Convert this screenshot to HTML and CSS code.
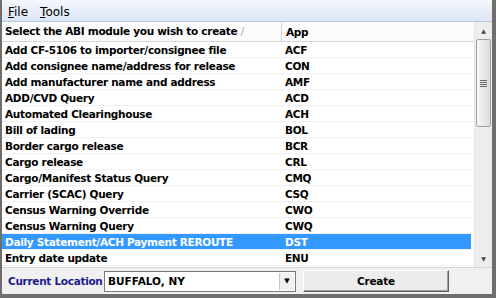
FILE: index.html
```html
<!DOCTYPE html>
<html lang="en">
<head>
  <meta charset="UTF-8" />
  <title>ABI Module</title>
  <link rel="stylesheet" href="styles.css">
</head>
<body>
<div class="window">
  <div class="menubar">
    <span class="menu"><u>F</u>ile</span>
    <span class="menu"><u>T</u>ools</span>
  </div>

  <div class="listwrap">
    <div class="list">
      <div class="row head">
        <div class="c1">Select the ABI module you wish to create <span class="sort">/</span></div>
        <div class="c2">App</div>
      </div>
      <div class="row"><div class="c1">Add CF-5106 to importer/consignee file</div><div class="c2">ACF</div></div>
      <div class="row"><div class="c1">Add consignee name/address for release</div><div class="c2">CON</div></div>
      <div class="row"><div class="c1">Add manufacturer name and address</div><div class="c2">AMF</div></div>
      <div class="row"><div class="c1">ADD/CVD Query</div><div class="c2">ACD</div></div>
      <div class="row"><div class="c1">Automated Clearinghouse</div><div class="c2">ACH</div></div>
      <div class="row"><div class="c1">Bill of lading</div><div class="c2">BOL</div></div>
      <div class="row"><div class="c1">Border cargo release</div><div class="c2">BCR</div></div>
      <div class="row"><div class="c1">Cargo release</div><div class="c2">CRL</div></div>
      <div class="row"><div class="c1">Cargo/Manifest Status Query</div><div class="c2">CMQ</div></div>
      <div class="row"><div class="c1">Carrier (SCAC) Query</div><div class="c2">CSQ</div></div>
      <div class="row"><div class="c1">Census Warning Override</div><div class="c2">CWO</div></div>
      <div class="row"><div class="c1">Census Warning Query</div><div class="c2">CWQ</div></div>
      <div class="row selected"><div class="c1">Daily Statement/ACH Payment REROUTE</div><div class="c2">DST</div></div>
      <div class="row"><div class="c1">Entry date update</div><div class="c2">ENU</div></div>
    </div>
    <div class="scrollbar">
      <div class="arrow">&#9650;</div>
      <div class="thumb"><span class="grip"></span></div>
      <div class="track"></div>
      <div class="arrow">&#9660;</div>
    </div>
  </div>

  <div class="footer">
    <span class="label">Current Location</span>
    <div class="combo">
      <span class="value">BUFFALO, NY</span>
      <span class="drop">&#9660;</span>
    </div>
    <button class="create">Create</button>
  </div>
</div>
</body>
</html>
```

FILE: styles.css
```css
body {
  margin: 0;
  font-family: 'DejaVu Sans', sans-serif;
  background: #fff;
}
.window {
  width: 490px;
  height: 294px;
  border-left: 2px solid #6e6e6e;
  border-right: 4px solid #6e6e6e;
  border-bottom: 4px solid #6e6e6e;
  background: #f0f0f0;
  display: flex;
  flex-direction: column;
}
.menubar {
  height: 22px;
  flex: none;
  display: flex;
  align-items: center;
  gap: 12px;
  padding: 3px 0 0 6px;
  box-sizing: border-box;
  font-size: 12px;
  background: linear-gradient(#f4f7fc, #dce6f4);
  border-bottom: 1px solid #b9c6d8;
}
.listwrap {
  display: flex;
  height: 245px;
  flex: none;
  background: #fff;
  border-bottom: 1px solid #d4d4d4;
}
.list {
  flex: 1;
  overflow: hidden;
}
.row {
  display: flex;
  height: 15px;
  align-items: center;
  font-weight: bold;
  font-size: 10.5px;
  letter-spacing: -0.3px;
  color: #000;
  border-bottom: 1px solid #f0f0f0;
}
.row.head {
  height: 19px;
  background: #fbfbfb;
  border-bottom: 1px solid #d5d5d5;
}
.c1 {
  width: 276px;
  padding-left: 3px;
  white-space: nowrap;
}
.c2 {
  padding-left: 4px;
}
.head .c1 {
  border-right: 1px solid #d5d5d5;
  height: 19px;
  line-height: 19px;
}
.sort {
  color: #aaa;
  font-weight: normal;
}
.row.selected {
  background: #3399ff;
  color: #fff;
  margin-right: 3px;
}
.scrollbar {
  width: 17px;
  display: flex;
  flex-direction: column;
  background: #ededed;
  border-left: 1px solid #e4e4e4;
}
.arrow {
  height: 17px;
  font-size: 6px;
  color: #444;
  display: flex;
  align-items: center;
  justify-content: center;
}
.thumb {
  height: 86px;
  margin: 0 1px;
  border: 1px solid #a0a0a0;
  border-radius: 2px;
  background: linear-gradient(to right, #f6f6f6, #dcdcdc);
  display: flex;
  align-items: center;
  justify-content: center;
}
.grip {
  width: 7px;
  height: 7px;
  background: repeating-linear-gradient(#666 0 1px, transparent 1px 2px);
}
.track {
  flex: 1;
}
.footer {
  flex: 1;
  display: flex;
  align-items: center;
  padding-left: 6px;
  gap: 4px;
}
.label {
  color: #1c1c8c;
  font-weight: bold;
  font-size: 10.5px;
  letter-spacing: -0.3px;
  white-space: nowrap;
  width: 92px;
}
.combo {
  width: 190px;
  height: 19px;
  border: 1px solid #7a7a7a;
  background: #fff;
  display: flex;
  align-items: center;
  justify-content: space-between;
  font-weight: bold;
  font-size: 10.5px;
}
.value {
  padding-left: 3px;
  white-space: nowrap;
}
.drop {
  width: 14px;
  height: 17px;
  margin-right: 1px;
  border-left: 1px solid #c8c8c8;
  background: #f0f0f0;
  font-size: 7px;
  display: flex;
  align-items: center;
  justify-content: center;
}
.create {
  margin-left: 3px;
  width: 146px;
  height: 22px;
  font-family: 'DejaVu Sans', sans-serif;
  font-weight: bold;
  font-size: 10.5px;
  letter-spacing: -0.2px;
  background: #ececec;
  border: 1px solid;
  border-color: #fff #606060 #606060 #fff;
  box-shadow: inset -1px -1px #a0a0a0;
}
```
